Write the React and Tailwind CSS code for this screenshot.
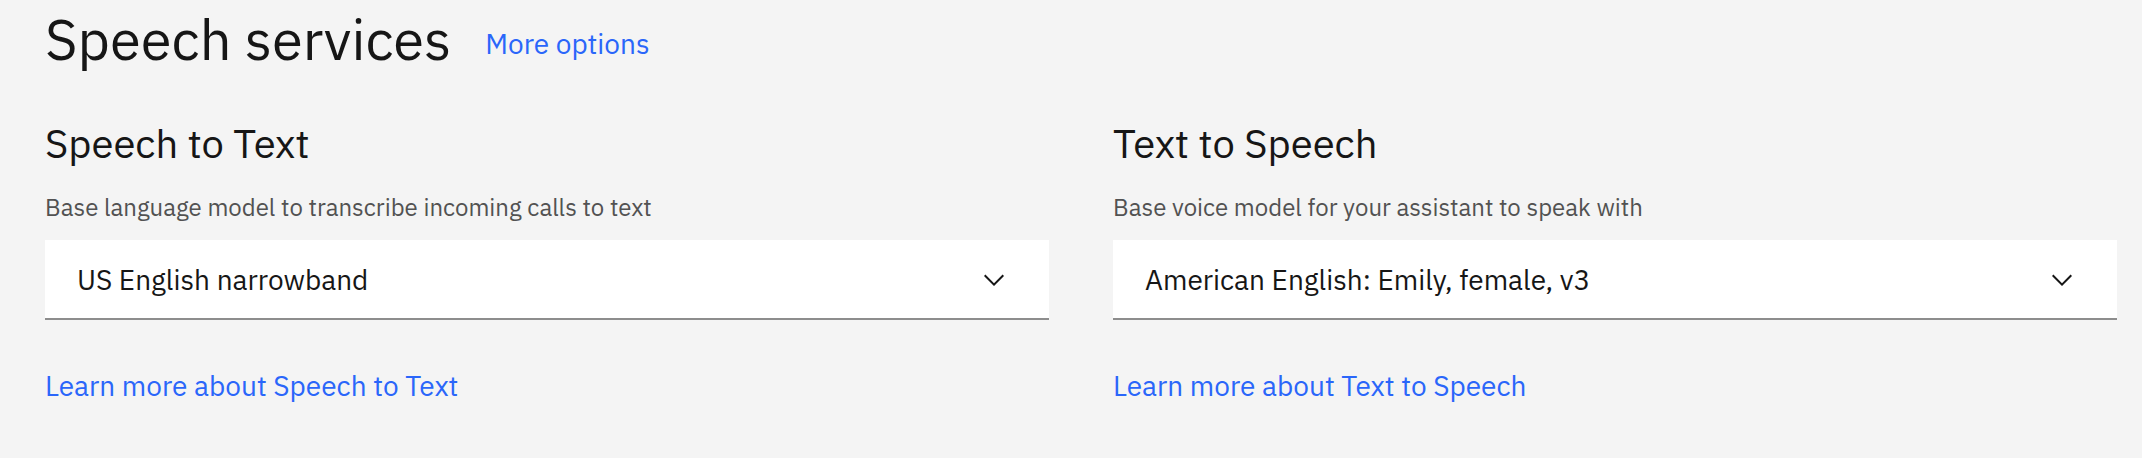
const services = [
  {
    id: "stt",
    title: "Speech to Text",
    label: "Base language model to transcribe incoming calls to text",
    value: "US English narrowband",
    link: "Learn more about Speech to Text",
  },
  {
    id: "tts",
    title: "Text to Speech",
    label: "Base voice model for your assistant to speak with",
    value: "American English: Emily, female, v3",
    link: "Learn more about Text to Speech",
  },
];

function Chevron() {
  return (
    <svg viewBox="0 0 16 16" fill="#161616" aria-hidden="true" className="pointer-events-none absolute right-[39px] top-6 size-8">
      <path d="M8 11 3 6 3.7 5.3 8 9.6 12.3 5.3 13 6z" />
    </svg>
  );
}

function Service({ id, title, label, value, link }) {
  return (
    <section>
      <h2 className="text-[40px] leading-[50px]">{title}</h2>
      <label htmlFor={id} className="mt-[23px] block text-2xl leading-8 text-[#525252]">
        {label}
      </label>
      <div className="relative mt-[17px]">
        <select
          id={id}
          defaultValue={value}
          className="block h-20 w-full appearance-none border-b-2 border-[#8d8d8d] bg-white px-8 pt-0.5 text-[28px]"
        >
          <option>{value}</option>
        </select>
        <Chevron />
      </div>
      <a href="#" className="mt-12 inline-block text-[28px] leading-9 text-[#2a66fa]">
        {link}
      </a>
    </section>
  );
}

export default function App() {
  return (
    <main className="min-h-screen bg-[#f4f4f4] pr-[25px] pl-[45px] pt-2 font-['IBM_Plex_Sans','Roboto',sans-serif] text-[#161616]">
      <header className="flex items-center gap-[34px]">
        <h1 className="text-[56px] leading-[62px]">Speech services</h1>
        <a href="#" className="mt-2.5 text-[28px] leading-9 text-[#2a66fa]">
          More options
        </a>
      </header>
      <div className="mt-12 grid grid-cols-2 gap-16">
        {services.map((s) => (
          <Service key={s.id} {...s} />
        ))}
      </div>
    </main>
  );
}
